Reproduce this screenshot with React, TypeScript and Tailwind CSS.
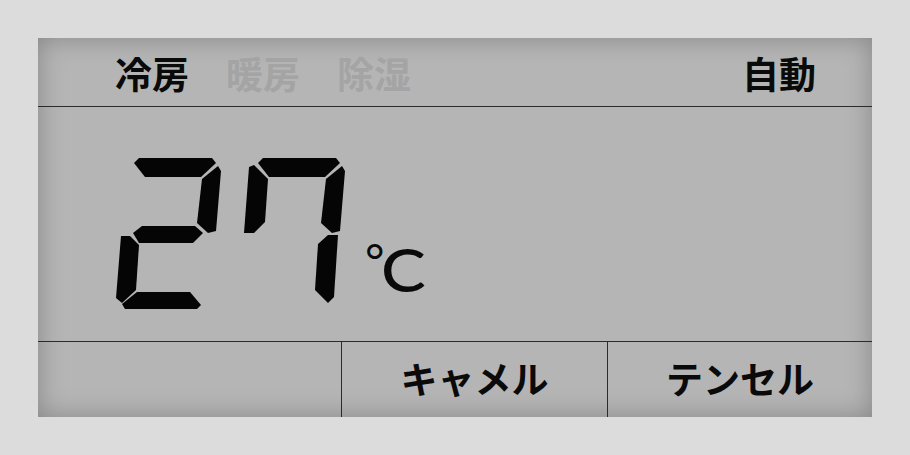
import React from 'react';

// segment outlines, drawn in page coordinates of the first digit
const segments: Record<string, string> = {
  a: "134,163 139,158 212,158 216,163 201,177 145,177",
  b: "218,166 221,171 216,231 208,233 197,223 202,179",
  c: "194,244 204,235 214,235 210,297 204,303 191,290",
  d: "122,304 137,292 190,292 201,305 197,309 125,309",
  e: "121,236 130,236 139,245 136,290 122,303 116,298",
  f: "125,167 130,165 144,179 141,222 130,233 120,233",
  g: "133,233 142,226 195,226 203,233 193,243 139,243",
};

const digitMap: Record<string, string[]> = {
  "2": ["a", "b", "g", "e", "d"],
  "7": ["a", "b", "c", "f"],
};

const modes = [
  { label: "冷房", active: true },
  { label: "暖房", active: false },
  { label: "除湿", active: false },
];

function SevenSeg({ value }: { value: string }) {
  return (
    <svg width="240" height="165" viewBox="110 150 240 165" className="shrink-0">
      {value.split("").map((ch, i) => (
        <g key={i} transform={`translate(${i * 124} 0)`}>
          {digitMap[ch].map((s) => (
            <polygon key={s} points={segments[s]} fill="#050505" />
          ))}
        </g>
      ))}
    </svg>
  );
}

export default function App() {
  return (
    <div className="w-[910px] h-[455px] bg-[#dcdcdc] pt-[38px] pl-[38px]" style={{ fontFamily: "'Noto Sans CJK JP', 'Liberation Sans', sans-serif" }}>
      <div className="w-[834px] h-[379px] bg-[#b5b5b5] shadow-[inset_0_0_26px_rgba(0,0,0,0.26)] flex flex-col">

        {/* mode row */}
        <div className="h-[69px] border-b border-[#2b2b2b] flex items-center justify-between pl-[77px] pr-[56px] pt-[3px]">
          <div className="flex gap-[37px]">
            {modes.map((m) => (
              <span key={m.label} className={`text-[37px] leading-none font-bold ${m.active ? "text-[#0a0a0a]" : "text-[#a4a4a4]"}`}>
                {m.label}
              </span>
            ))}
          </div>
          <span className="text-[37px] leading-none font-bold text-[#0a0a0a]">自動</span>
        </div>

        {/* temperature */}
        <div className="h-[234px] flex items-start" style={{ fontFamily: "Lato, sans-serif" }}>
          <div className="ml-[72px] mt-[43px]">
            <SevenSeg value="27" />
          </div>
          <span className="ml-[15px] mt-[130px] text-[60px] leading-none font-medium text-[#0a0a0a] whitespace-nowrap">
            <span className="text-[47px] font-normal align-[14px] tracking-[-3px]">°</span>
            <span className="inline-block origin-left scale-x-[1.12]">C</span>
          </span>
        </div>

        {/* fabric row */}
        <div className="h-[76px] border-t border-[#2b2b2b] grid grid-cols-[303px_266px_265px]">
          <div />
          <div className="border-l border-[#2b2b2b] flex items-center justify-center pb-[3px]">
            <span className="text-[37px] leading-none font-bold text-[#0a0a0a]">キャメル</span>
          </div>
          <div className="border-l border-[#2b2b2b] flex items-center justify-center pb-[3px]">
            <span className="text-[37px] leading-none font-bold text-[#0a0a0a]">テンセル</span>
          </div>
        </div>

      </div>
    </div>
  );
}
